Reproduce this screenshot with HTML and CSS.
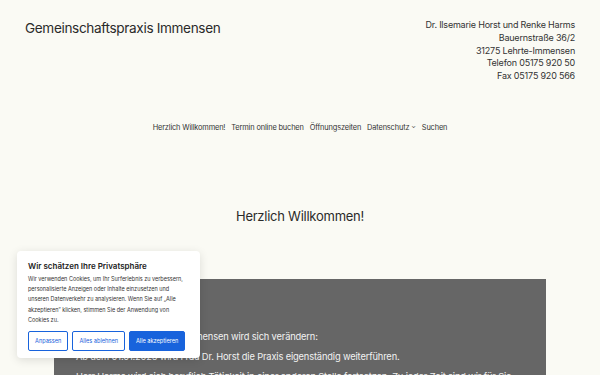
FILE: index.html
```html
<!DOCTYPE html>
<html lang="de">
<head>
  <meta charset="UTF-8">
  <title>Gemeinschaftspraxis Immensen</title>
  <link rel="stylesheet" href="styles.css">
</head>
<body>
  <header class="site-header">
    <div class="site-title">Gemeinschaftspraxis Immensen</div>
    <div class="contact">
      Dr. Ilsemarie Horst und Renke Harms<br>
      Bauernstraße 36/2<br>
      31275 Lehrte-Immensen<br>
      Telefon 05175 920 50<br>
      Fax 05175 920 566
    </div>
  </header>

  <nav class="main-nav">
    <a href="#">Herzlich Willkommen!</a>
    <a href="#">Termin online buchen</a>
    <a href="#">Öffnungszeiten</a>
    <a href="#">Datenschutz <span class="caret">&#x2304;</span></a>
    <a href="#">Suchen</a>
  </nav>

  <h1 class="page-title">Herzlich Willkommen!</h1>

  <section class="notice">
    <p>Die Gemeinschaftspraxis Immensen wird sich verändern:</p>
    <p>Ab dem 01.01.2025 wird Frau Dr. Horst die Praxis eigenständig weiterführen.</p>
    <p>Herr Harms wird sich beruflich Tätigkeit in einer anderen Stelle fortsetzen. Zu jeder Zeit sind wir für Sie da.</p>
  </section>

  <div class="cookie-box">
    <div class="cookie-title">Wir schätzen Ihre Privatsphäre</div>
    <p class="cookie-text">Wir verwenden Cookies, um Ihr Surferlebnis zu verbessern, personalisierte Anzeigen oder Inhalte einzusetzen und unseren Datenverkehr zu analysieren. Wenn Sie auf „Alle akzeptieren“ klicken, stimmen Sie der Anwendung von Cookies zu.</p>
    <div class="cookie-buttons">
      <button class="btn-outline">Anpassen</button>
      <button class="btn-outline">Alles ablehnen</button>
      <button class="btn-primary">Alle akzeptieren</button>
    </div>
  </div>
</body>
</html>
```

FILE: styles.css
```css
body {
  margin: 0;
  background: #fafaf4;
  color: #2a2a2a;
  font-family: Inter, "Noto Sans", sans-serif;
  overflow: hidden;
  height: 375px;
}
.site-header {
  display: flex;
  justify-content: space-between;
  padding: 19px 25px 0 25px;
}
.site-title {
  font-size: 13.6px;
  margin-top: 1px;
  letter-spacing: -0.35px;
}
.contact {
  text-align: right;
  font-size: 9px;
  line-height: 12.8px;
  letter-spacing: -0.2px;
  color: #333;
}
.main-nav {
  display: flex;
  justify-content: center;
  gap: 6px;
  margin-top: 40px;
  font-size: 7.4px;
  letter-spacing: -0.15px;
}
.main-nav a {
  color: #333;
  text-decoration: none;
}
.caret {
  font-size: 6px;
  position: relative;
  top: -2px;
}
.page-title {
  font-weight: 400;
  font-size: 13px;
  letter-spacing: -0.25px;
  text-align: center;
  margin: 76px 0 0 0;
}
.notice {
  background: #666666;
  margin: 55px 54px 0 54px;
  padding: 52px 22px 0 22px;
  color: #f2f2f2;
  font-size: 9.3px;
  letter-spacing: -0.15px;
  height: 200px;
}
.notice p {
  margin: 0 0 9px 0;
  line-height: 11px;
}
.cookie-box {
  position: absolute;
  left: 17px;
  top: 251px;
  width: 157px;
  padding: 10px 15px 7px 11px;
  background: #fff;
  border-radius: 4px;
  box-shadow: 0 2px 10px rgba(0,0,0,0.12);
}
.cookie-title {
  font-size: 8px;
  font-weight: 600;
  color: #222;
}
.cookie-text {
  font-size: 5.5px;
  line-height: 10.2px;
  color: #333;
  margin: 3px 0 6px 0;
}
.cookie-buttons {
  display: flex;
  gap: 4px;
}
.cookie-buttons button {
  font-family: inherit;
  font-size: 5.6px;
  height: 20px;
  border-radius: 2px;
  padding: 0;
  cursor: pointer;
}
.btn-outline {
  background: #fff;
  color: #1863dc;
  border: 1px solid #1863dc;
  width: 42px;
}
.btn-outline + .btn-outline {
  width: 55px;
}
.btn-primary {
  background: #1863dc;
  color: #fff;
  border: 1px solid #1863dc;
  width: 58px;
}
```
